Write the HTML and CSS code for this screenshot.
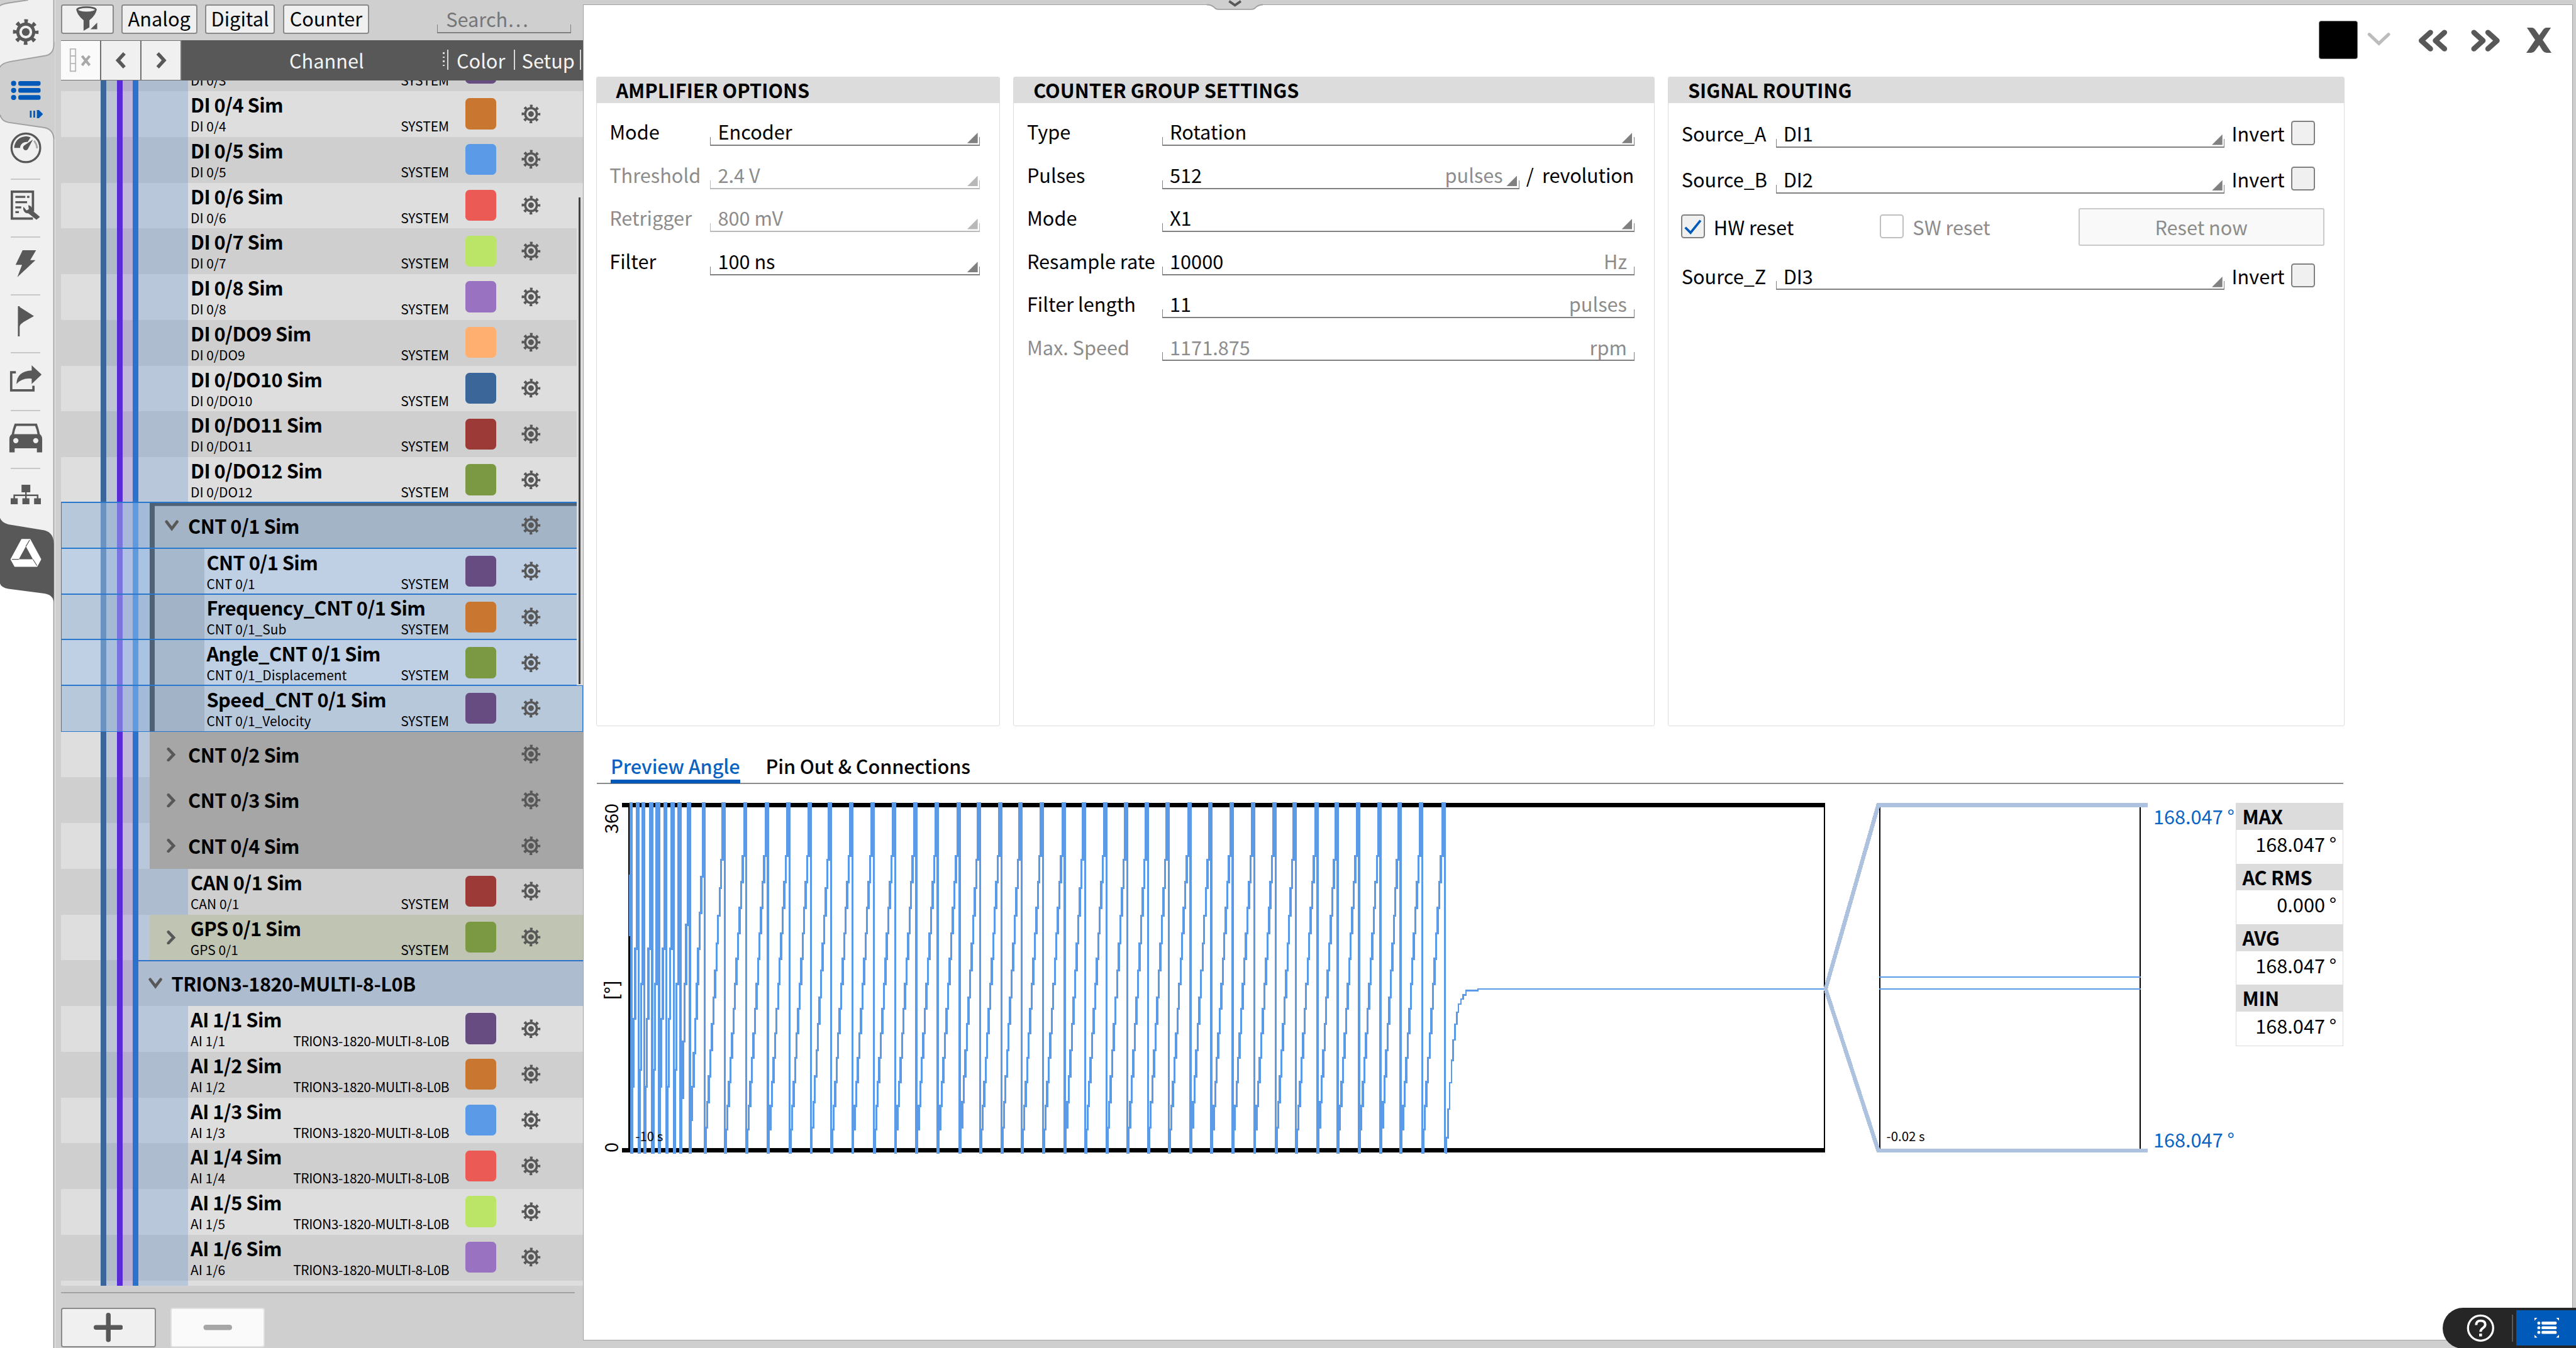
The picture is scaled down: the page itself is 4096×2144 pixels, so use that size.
FILE: index.html
```html
<!DOCTYPE html>
<html lang="en">
<head>
<meta charset="utf-8">
<title>Channel setup</title>
<link rel="stylesheet" href="styles.css">
</head>
<body>
<svg class="defs" aria-hidden="true">
  <symbol id="gear" viewBox="0 0 34 34">
    <circle cx="17" cy="17" r="14" fill="none" stroke="currentColor" stroke-width="5" stroke-dasharray="4.6 6.4" stroke-dashoffset="2.3"/>
    <circle cx="17" cy="17" r="10.3" fill="none" stroke="currentColor" stroke-width="4"/>
    <circle cx="17" cy="17" r="5" fill="currentColor"/>
  </symbol>
  <symbol id="chev-down" viewBox="0 0 24 20"><path d="M3 3 L12 15 L21 3" fill="none" stroke="currentColor" stroke-width="5" stroke-linecap="round"/></symbol>
  <symbol id="chev-right" viewBox="0 0 18 24"><path d="M4 2.5 L13 12 L4 21.5" fill="none" stroke="currentColor" stroke-width="5" stroke-linecap="round"/></symbol>
</svg>
<div class="app">
  <nav class="sidebar">
    <svg class="tabs-bg" viewBox="0 0 94 2304">
      <path d="M0 0H94V2304H0Z" fill="#fff"/>
      <path d="M0 8 Q2 4 14 3 L48 -2 H92 V925 L0 960Z" fill="#f0f0f0"/>
      <path d="M0 0H48L14 5Q2 7 0 10Z" fill="#cfcfcf"/>
      <path d="M94 72 H92 Q92 92 78 95 L18 105 Q2 108 0 115 V196 Q3 207 14 209 L76 218 Q92 221 92 238 H94Z" fill="#cfcfcf"/>
      <path d="M0 10Q2 7 14 5L48 0M92 0V75Q92 92 78 95L18 105Q2 108 0 115M0 196Q3 207 14 209L76 218Q92 221 92 240V2304" fill="none" stroke="#a0a0a0" stroke-width="2"/>
      <path d="M0 885 Q3 893 14 896 L76 906 Q92 910 92 930 V1030 Q91 1016 76 1014 L14 1006 Q2 1004 0 997Z" fill="#585858"/>
    </svg>
    <div class="slot slot-first"><svg class="ic" width="45" height="45"><use href="#gear"/></svg></div>
    <div class="slot slot-active">
      <svg width="52" height="34" viewBox="0 0 52 34"><g fill="#0059b8"><circle cx="5" cy="5" r="4.4"/><circle cx="5" cy="17" r="4.4"/><circle cx="5" cy="29" r="4.4"/><rect x="13" y="1" width="38" height="8" rx="3"/><rect x="13" y="13" width="38" height="8" rx="3"/><rect x="13" y="25" width="38" height="8" rx="3"/></g></svg>
      <svg class="pin" width="24" height="14" viewBox="0 0 24 14"><path d="M2 1V13M8 1V13" stroke="#0059b8" stroke-width="3"/><path d="M12.500 0H16L23 7L16 14H12.500Z" fill="#0059b8"/></svg>
    </div>
    <div class="slot"><svg width="54" height="54" viewBox="0 0 54 54"><circle cx="27" cy="27" r="24.500" fill="none" stroke="#585858" stroke-width="3.500"/><path d="M7 27A20 20 0 0 1 35 9L30 17A11 11 0 0 0 17 27Z" fill="#585858"/><path d="M39 13L31 28A4.500 4.500 0 1 1 24 23Z" fill="#585858"/><path d="M41 15Q46 21 46 28" fill="none" stroke="#a8a8a8" stroke-width="3"/></svg></div>
    <div class="slot rule"><svg width="52" height="52" viewBox="0 0 52 52"><path d="M38 30V2H2V48H30" fill="none" stroke="#585858" stroke-width="4"/><path d="M38 30V36M30 48H38" stroke="#585858" stroke-width="4"/><path d="M8 11H25M28 11H32M8 20H28M8 29H18M8 37H14" stroke="#585858" stroke-width="3.500"/><path d="M22 28A8 8 0 0 0 30 39L44 50L50 45L37 34A8 8 0 0 0 30 25L31 32L27 34Z" fill="#585858"/></svg></div>
    <div class="slot rule"><svg width="40" height="48" viewBox="0 0 40 48"><path d="M15 1H38L28 18H37L6 47L14 26H3Z" fill="#585858"/></svg></div>
    <div class="slot rule"><svg width="28" height="52" viewBox="0 0 28 52"><path d="M2 0V52" stroke="#585858" stroke-width="3"/><path d="M3 1L28 17L10 27Q5 30 3 35Z" fill="#585858"/></svg></div>
    <div class="slot rule"><svg width="56" height="48" viewBox="0 0 56 48"><path d="M11 13H3V44H41V36" fill="none" stroke="#585858" stroke-width="4"/><path d="M38 1L55 17L38 33V24Q22 22 12 33Q13 11 38 10Z" fill="#585858"/></svg></div>
    <div class="slot rule slot-car"><svg width="58" height="52" viewBox="0 0 58 52"><path d="M10 2H48Q51 10 53 20Q57 23 57 28V51H48V44H10V51H1V28Q1 23 5 20Q7 10 10 2ZM13 6Q10 13 9 20H49Q48 13 45 6Z" fill="#585858" fill-rule="evenodd"/><circle cx="12" cy="31" r="4.500" fill="#f0f0f0"/><circle cx="46" cy="31" r="4.500" fill="#f0f0f0"/></svg></div>
    <div class="slot rule slot-org"><svg width="52" height="34" viewBox="0 0 52 34"><path d="M18.500 0H33.500V13H18.500ZM0 23H12V34H0ZM20 23H32V34H20ZM40 23H52V34H40Z" fill="#585858"/><path d="M26 12V24M6 24V18H46V24" fill="none" stroke="#585858" stroke-width="2.600"/></svg></div>
    <div class="slot slot-logo"><svg width="54" height="48" viewBox="0 0 54 48"><path d="M20 1H34L52.500 35L46 47H8L1.500 35Z" fill="#fff" stroke="#fff" stroke-width="1.500" stroke-linejoin="round"/><path d="M27 13L39 35H15Z" fill="#585858"/><path d="M27 13L33.500 2M39 35L46 46M15 35H3" fill="none" stroke="#585858" stroke-width="1.200"/></svg></div>
  </nav>

  <section class="channels">
    <div class="filterbar">
      <button class="btn btn-funnel"><svg width="44" height="44" viewBox="0 0 44 44"><path d="M4 6Q4 14 16 24V42L26 36V24Q38 14 38 6Z" fill="#585858"/><ellipse cx="21" cy="6" rx="16" ry="4.500" fill="#f0f0f0" stroke="#585858" stroke-width="3"/><path d="M40 26V40H26Z" fill="#585858" stroke="#f0f0f0" stroke-width="1.500"/></svg></button>
      <button class="btn btn-analog">Analog</button>
      <button class="btn btn-digital">Digital</button>
      <button class="btn btn-counter">Counter</button>
      <div class="search">Search…</div>
    </div>
    <div class="listhead">
      <div class="hbtn dim"><svg width="40" height="42" viewBox="0 0 40 42"><path d="M3 2H12V40H3ZM3 14H12M3 27H12" fill="none" stroke="#b8b8b8" stroke-width="2"/><path d="M23 14L36 30M36 14L23 30" stroke="#a8a8a8" stroke-width="4.500"/></svg></div>
      <div class="hbtn"><svg width="22" height="30" viewBox="0 0 22 30"><path d="M17 3L6 15L17 27" fill="none" stroke="#585858" stroke-width="6"/></svg></div>
      <div class="hbtn"><svg width="22" height="30" viewBox="0 0 22 30"><path d="M5 3L16 15L5 27" fill="none" stroke="#585858" stroke-width="6"/></svg></div>
      <div class="hcol hcol-channel">Channel<i class="grip"></i></div>
      <div class="hcol hcol-color">Color</div>
      <div class="hcol hcol-setup">Setup</div>
    </div>
    <div class="listview">
      <div class="rows" id="rows"></div>
      <div class="scroll"></div>
    </div>
    <div class="listfoot">
      <button class="fbtn"><svg width="50" height="50" viewBox="0 0 50 50"><path d="M25 4V46M4 25H46" stroke="#585858" stroke-width="8" stroke-linecap="round"/></svg></button>
      <button class="fbtn off"><svg width="50" height="50" viewBox="0 0 50 50"><path d="M5 25H45" stroke="#a6a6a6" stroke-width="9" stroke-linecap="round"/></svg></button>
    </div>
  </section>

  <main class="main">
    <svg class="notch" width="96" height="18" viewBox="0 0 96 18"><path d="M0 7Q8 8 13 13Q15 16 20 16H76Q81 16 83 13Q88 8 96 7V0H0Z" fill="#cfcfcf"/><path d="M0 8Q8 8 13 13Q15 16 20 16H76Q81 16 83 13Q88 8 96 8" fill="none" stroke="#a0a0a0" stroke-width="2"/><path d="M38 2L48 9L58 2" fill="none" stroke="#585858" stroke-width="4"/></svg>
    <div class="card-page">
      <header class="topbar">
        <span class="colorbox"></span>
        <svg class="t-chev" width="40" height="26" viewBox="0 0 40 26"><path d="M3.500 4L20 19.500L36.500 4" fill="none" stroke="#bcbcbc" stroke-width="5.500" stroke-linecap="round"/></svg>
        <svg class="t-prev" width="50" height="40" viewBox="0 0 50 40"><path d="M21 6L5.500 20L21 34M45 6L29.500 20L45 34" fill="none" stroke="#585858" stroke-width="9" stroke-linecap="round" stroke-linejoin="round"/></svg>
        <svg class="t-next" width="50" height="40" viewBox="0 0 50 40"><path d="M5 6L20.500 20L5 34M29 6L44.500 20L29 34" fill="none" stroke="#585858" stroke-width="9" stroke-linecap="round" stroke-linejoin="round"/></svg>
        <svg class="t-close" width="44" height="46" viewBox="0 0 44 46"><path d="M1 1H9Q14 1 17 7L22 14L27 7Q30 1 35 1H42L28 22L43 44H35Q30 44 27 39L22 31L16 39Q13 44 8 44H0L15 22Z" fill="#585858"/></svg>
      </header>

      <div class="panels">
        <section class="panel amp">
          <h2>AMPLIFIER OPTIONS</h2>
          <div class="form">
            <div class="frow"><label>Mode</label><div class="control drop">Encoder</div></div>
            <div class="frow off"><label>Threshold</label><div class="control drop">2.4 V</div></div>
            <div class="frow off"><label>Retrigger</label><div class="control drop">800 mV</div></div>
            <div class="frow"><label>Filter</label><div class="control drop">100 ns</div></div>
          </div>
        </section>
        <section class="panel counter">
          <h2>COUNTER GROUP SETTINGS</h2>
          <div class="form">
            <div class="frow"><label>Type</label><div class="control drop">Rotation</div></div>
            <div class="frow"><label>Pulses</label><div class="control drop">512<span class="unit">pulses</span></div><span class="suffix">/ &nbsp;revolution</span></div>
            <div class="frow"><label>Mode</label><div class="control drop">X1</div></div>
            <div class="frow"><label>Resample rate</label><div class="control">10000<span class="unit">Hz</span></div></div>
            <div class="frow"><label>Filter length</label><div class="control">11<span class="unit">pulses</span></div></div>
            <div class="frow ro"><label>Max. Speed</label><div class="control">1171.875<span class="unit">rpm</span></div></div>
          </div>
        </section>
        <section class="panel signal">
          <h2>SIGNAL ROUTING</h2>
          <div class="form">
            <div class="frow"><label>Source_A</label><div class="control drop">DI1</div><span class="inv">Invert</span><i class="check"></i></div>
            <div class="frow"><label>Source_B</label><div class="control drop">DI2</div><span class="inv">Invert</span><i class="check"></i></div>
            <div class="resetrow">
              <i class="check"><svg width="34" height="34" viewBox="0 0 34 34"><path d="M4 18L13 27L30 6" fill="none" stroke="#0059b8" stroke-width="4"/></svg></i><span class="hw">HW reset</span>
              <i class="check off"></i><span class="sw">SW reset</span>
              <button class="reset">Reset now</button>
            </div>
            <div class="frow"><label>Source_Z</label><div class="control drop">DI3</div><span class="inv">Invert</span><i class="check"></i></div>
          </div>
        </section>
      </div>

      <div class="ptabs"><span class="ptab on">Preview Angle</span><span class="ptab">Pin Out &amp; Connections</span></div>

      <div class="preview">
        <div class="yaxis"><span class="y360">360</span><span class="yunit">[°]</span><span class="y0">0</span></div>
        <svg class="plot" width="2612" height="600" viewBox="1060 1371 2612 600">
          <path d="M1074.500 1376V1966M3116 1376V1966" stroke="#000" stroke-width="2.500"/>
          <path d="M1062 1376H3117.500M1062 1966H3117.500" stroke="#000" stroke-width="7.500"/>
          <path id="wave" fill="none" stroke="#5a9ae6" stroke-width="3.700"/>
          <path id="settle" fill="none" stroke="#5a9ae6" stroke-width="2.700"/>
          <path d="M3210.500 1376V1966M3655.700 1376V1966" stroke="#000" stroke-width="2.500"/>
          <path d="M3668 1376H3208L3118 1690L3208 1966H3668" fill="none" stroke="#adc2df" stroke-width="7"/>
          <path d="M3209 1669.500H3656.500M3209 1690H3656.500" stroke="#5a9ae6" stroke-width="2.700"/>
          <text class="ticktext" x="1085" y="1950.500">-10 s</text>
          <text class="ticktext" x="3222" y="1950.500">-0.02 s</text>
        </svg>
        <div class="limits"><span>168.047 °</span><span>168.047 °</span></div>
        <dl class="stats">
          <dt>MAX</dt><dd>168.047 °</dd>
          <dt>AC RMS</dt><dd>0.000 °</dd>
          <dt>AVG</dt><dd>168.047 °</dd>
          <dt>MIN</dt><dd>168.047 °</dd>
        </dl>
      </div>
    </div>
    <div class="dock">
      <svg width="50" height="50" viewBox="0 0 50 50"><circle cx="25" cy="25" r="21.500" fill="none" stroke="#fff" stroke-width="3.500"/><path d="M17.500 20Q17.500 12.500 25 12.500Q33 12.500 33 19Q33 22 29 25Q25 28 25 31.500" fill="none" stroke="#fff" stroke-width="4.200"/><rect x="22.600" y="34.500" width="4.800" height="4.800" fill="#fff"/></svg>
      <i class="docksep"></i>
      <div class="dockblue"><svg width="44" height="36" viewBox="0 0 44 36"><g fill="#fff"><path d="M1 1H6L1 6ZM43 1H38L43 6ZM1 35H6L1 30ZM43 35H38L43 30Z"/><rect x="6" y="7.500" width="5" height="5" rx="2"/><rect x="6" y="15.500" width="5" height="5" rx="2"/><rect x="6" y="23.500" width="5" height="5" rx="2"/><rect x="13" y="7.500" width="26" height="5" rx="2"/><rect x="13" y="15.500" width="26" height="5" rx="2"/><rect x="13" y="23.500" width="26" height="5" rx="2"/></g></svg></div>
    </div>
  </main>
</div>
<script src="app.js"></script>
</body>
</html>
```
FILE: styles.css
```css
* { box-sizing: border-box; margin: 0; padding: 0; }
html, body { width: 4096px; height: 2144px; overflow: hidden; background: #cfcfcf; }
.defs { position: absolute; width: 0; height: 0; }
svg { display: block; flex: none; }
button { font: inherit; color: inherit; }

.app {
  zoom: 0.930909;
  display: flex;
  width: 4400px;
  height: 2304px;
  overflow: hidden;
  background: #cfcfcf;
  color: #000;
  font-family: "Noto Sans CJK SC", "Noto Sans", sans-serif;
  font-size: 33px;
  line-height: 38px;
  white-space: nowrap;
}

/* icon sidebar */
.sidebar { position: relative; width: 94px; flex: none; display: flex; flex-direction: column; }
.tabs-bg { position: absolute; left: 0; top: 0; width: 94px; height: 2304px; }
.slot { position: relative; width: 88px; height: 98.8px; padding-bottom: 8px; flex: none; display: flex; align-items: center; justify-content: center; color: #585858; }
.slot-first { height: 109px; padding-bottom: 0; }
.slot-active { height: 98px; padding-bottom: 8px; }
.pin { position: absolute; left: 50px; top: 79px; }
.slot.rule::before { content: ""; position: absolute; left: 18px; right: 19px; top: -1px; height: 2.5px; background: #c8c8c8; }
.slot-car { padding-bottom: 4px; }
.slot-org { height: 90px; padding-bottom: 0; }
.slot-logo { height: 110px; padding-bottom: 0; }

/* channel list */
.channels { width: 902px; flex: none; padding-left: 10px; display: flex; flex-direction: column; }
.filterbar { height: 69px; display: flex; padding-top: 7px; gap: 13px; }
.btn { height: 50.500px; background: #f0f0f0; border: 2.5px solid #8a8a8a; border-radius: 4px; line-height: 44px; text-align: center; display: flex; justify-content: center; }
.btn-funnel { width: 90px; align-items: center; }
.btn-analog { width: 130px; }
.btn-digital { width: 120px; }
.btn-counter { width: 148px; }
.search { position: relative; width: 229px; margin-left: 103px; padding-left: 15px; line-height: 49px; color: #767676; }
.search::after, .control::after { content: ""; position: absolute; left: 0; right: 0; bottom: 0; height: 13px; border: 2px solid #808080; border-top: 0; border-bottom-width: 3px; }
.search::after { bottom: 12px; }

.listhead { height: 68px; background: #585858; display: flex; color: #f4f4f4; }
.hbtn { width: 69px; border: 1px solid #707070; border-width: 2px 3px 2px 0; background: #f0f0f0; display: flex; align-items: center; justify-content: center; }
.hbtn.dim { background: #fafafa; }
.hcol { position: relative; height: 68px; line-height: 69px; text-align: center; }
.hcol::after { content: ""; position: absolute; right: 0; top: 16px; height: 34px; width: 2px; background: #d8d8d8; }
.hcol-channel { width: 455px; padding-left: 39px; }
.hcol-color { width: 114px; padding-right: 3px; }
.hcol-setup { width: 113px; }
.grip { position: absolute; right: 7px; top: 20px; width: 3px; height: 28px; background: repeating-linear-gradient(#d8d8d8 0 3px, transparent 3px 7px); }

.listview { position: relative; height: 2060px; overflow: hidden; }
.rows { margin-top: -59.2px; }
.row { position: relative; display: flex; height: 78.16px; width: 892px; --bg: #dedede; --t1: #bdc6d2; --t2: #c2b8dc; --t3: #b9c7da; --b1: #3a6699; --b2: #5a2ad9; --b3: #2a72cc; background: var(--bg); }
.row.dark { --bg: #cfcfcf; --t1: #b0b9c6; --t2: #b6acd0; --t3: #aebccf; }
.row.sel { --bg: #bfd0e4; --t1: #a9c0dc; --t2: #b0bfe4; --t3: #a9c3e2; --b1: #6b93c1; --b2: #7a74de; --b3: #5f9adf; }
.row.sel.dark { --bg: #b8c8db; --t1: #a4b9d3; --t2: #a9b7da; --t3: #a3bbd9; }
.row.sel::after { content: ""; position: absolute; left: 0; right: 0; top: -2px; bottom: -1px; border: solid #2a78cc; border-width: 3px 0 0 2px; }
.row.last::after { border-width: 3px 2px 3px 2px; }
.row i { flex: none; }
.lead { width: 68.3px; }
.b1 { width: 9.6px; background: var(--b1); }
.t1 { width: 17.5px; background: var(--t1); }
.b2 { width: 9.6px; background: var(--b2); }
.t2 { width: 18px; background: var(--t2); }
.b3 { width: 9.8px; background: var(--b3); }
.t3 { width: 84.8px; background: var(--t3); }
.group .t3, .child .t3 { width: 18.6px; }
.device .t3 { width: 0; }
.b4 { width: 9px; background: #4f6275; }
.t4 { width: 84.5px; background: #a6b8cb; }
.dark .t4 { background: #a2b3c7; }
.cell { flex: 1; display: flex; min-width: 0; }
.group .cell { background: #a6a6a6; }
.open .cell { background: #a3b4c7; }
.open .cell { box-shadow: inset 0 5px 0 #4f6275; }
.gps .cell { background: #bfc4b3; }
.device .cell { background: #aebccf; border-top: 3px solid #2a72cc; }
.names { flex: 1; padding-left: 4px; }
.name { font-weight: 700; height: 45px; line-height: 46px; letter-spacing: -0.55px; }
.sub { display: flex; justify-content: space-between; font-size: 22.500px; line-height: 29px; height: 29px; }
.sub .long { letter-spacing: -0.45px; }
.group .name, .device .name { height: 78px; line-height: 78px; }
.group.gps .name { height: 45px; line-height: 46px; }
.device .name { line-height: 76px; }
.chev { flex: none; width: 66px; padding-left: 28px; display: flex; align-items: center; color: #585858; }
.gps .chev { width: 70px; }
.device .chev { padding-left: 17px; width: 56px; }
.open .chev { padding-left: 17px; width: 57px; }
.swatch { width: 53px; height: 53px; margin: 12px 2px 0 28px; border-radius: 7px; background: var(--c); }
.noswatch { width: 53px; margin-left: 30px; }
.cog { margin: 22px 72px 0 41px; color: #585858; }
.scroll { position: absolute; right: 0; top: 198px; width: 10.5px; height: 836px; background: #dedede; padding: 2px 4px 2px 3px; }
.scroll::before { content: ""; display: block; height: 100%; background: #404040; }

.listfoot { margin-top: 11px; margin-right: 14px; border-top: 3px solid #a2a2a2; padding-top: 24px; display: flex; gap: 25px; }
.fbtn { width: 162px; height: 68px; background: #f0f0f0; border: 2.5px solid #8a8a8a; border-radius: 4px; display: flex; align-items: center; justify-content: center; }
.fbtn.off { width: 161px; background: #fafafa; border-color: #e0e0e0; }

/* main page */
.main { position: relative; flex: 1; padding: 7px 5px 14px 0; }
.notch { position: absolute; left: 1065px; top: 0; }
.card-page { height: 2283px; background: #fff; border: 2px solid #a2a2a2; padding-left: 21px; }
.topbar { height: 123px; padding-top: 27px; display: flex; justify-content: flex-end; padding-right: 35px; }
.colorbox { width: 66px; height: 66px; background: #000; border-radius: 4px; border: 1px solid #777; margin-right: 16px; }
.t-chev { margin: 20px 47px 0 0; }
.t-prev { margin: 14px 41px 0 0; }
.t-next { margin: 14px 44px 0 0; }
.t-close { margin-top: 11px; }

.panels { display: flex; gap: 23px; height: 1110px; }
.panel { border: 2px solid #dcdcdc; border-radius: 3px; }
.panel h2 { height: 44px; background: #dcdcdc; font-size: 33px; font-weight: 700; line-height: 42px; padding-left: 33px; }
.amp { width: 690px; }
.counter { width: 1095px; }
.signal { width: 1156px; }
.form { display: flex; flex-direction: column; gap: 28.5px; padding-top: 28.5px; }
.frow { display: flex; height: 45px; }
.control { position: relative; flex: 1; padding-left: 13px; display: flex; justify-content: space-between; }
.frow, .control, .inv { line-height: 40px; }
.drop::before { content: ""; position: absolute; right: 4px; bottom: 5px; width: 18px; height: 18px; background: #808080; clip-path: polygon(100% 0, 100% 100%, 0 100%); }
.off .drop::before { background: #b8b8b8; }
.off .control::after { border-color: #bababa; }
.off, .ro { color: #8c8c8c; }
.unit { color: #8c8c8c; margin-right: 13px; }
.drop .unit { margin-right: 28px; }
.suffix { padding-left: 12px; width: 197px; letter-spacing: -0.2px; }
.amp .form { padding-left: 22px; padding-right: 33px; }
.amp label { width: 172px; }
.counter .form { padding-left: 22px; padding-right: 33px; }
.counter label { width: 231px; }
.signal .form { padding: 31.5px 50px 0 22px; gap: 33px; }
.signal label { width: 161px; }
.inv { width: 113px; padding-left: 12px; }
.check { width: 41px; height: 41px; margin-top: -1px; background: #f0f0f0; border: 2.5px solid #808080; border-radius: 5px; display: flex; justify-content: center; align-items: center; }
.check.off { background: #fff; border-color: #c0c0c0; }
.resetrow { display: flex; align-items: center; height: 64px; margin: -8px -16px -2px -1px; }
.hw { width: 299px; padding-left: 15px; }
.sw { flex: 1; padding-left: 15px; color: #8c8c8c; }
.reset { width: 420px; height: 64px; background: #f9f9f9; border: 2.5px solid #cacaca; border-radius: 3px; color: #8c8c8c; }

.ptabs { display: flex; gap: 44px; margin: 47px 0 0 1px; width: 2984px; height: 52px; padding-left: 24px; border-bottom: 2.5px solid #8c8c8c; font-weight: 500; letter-spacing: -0.15px; }
.ptab { height: 50px; line-height: 41px; }
.ptab.on { color: #0a63c2; border-bottom: 7px solid #0059b8; }

.preview { display: flex; margin-top: 31px; }
.yaxis { width: 42px; height: 600px; display: flex; flex-direction: column; align-items: center; justify-content: space-between; padding: 2px 0; }
.yaxis span { writing-mode: vertical-rl; transform: rotate(180deg); margin-left: 8px; font-size: 31px; line-height: 36px; }
.yaxis .yunit { margin-top: 6px; font-weight: 500; }
.plot { shape-rendering: crispEdges; }
.ticktext { font-size: 22px; }
.limits { width: 147px; height: 600px; padding: 6px 0 8px 6px; line-height: 34px; display: flex; flex-direction: column; justify-content: space-between; color: #0a63c2; }
.stats { width: 183px; height: 415px; border: 2px solid #dcdcdc; border-top: 0; margin-top: 1px; }
.stats dt { height: 46px; line-height: 46px; padding-left: 10px; background: #dcdcdc; font-weight: 700; letter-spacing: -0.3px; }
.stats dd { height: 57.5px; line-height: 47px; text-align: right; padding-right: 10px; }

.dock { position: absolute; right: 0; bottom: 0; width: 228px; height: 70px; background: #262626; border-radius: 36px 0 0 36px; display: flex; align-items: center; padding-left: 40px; }
.docksep { width: 2.5px; height: 46px; background: #5a5a5a; margin: 0 5px 0 28px; }
.dockblue { flex: 1; height: 60px; background: #005ab9; display: flex; align-items: center; padding-left: 31px; }
```
FILE: app.js
```js
const C = { violet: '#664c80', orange: '#c97730', blue: '#5a9ae6', red: '#eb5a55', lime: '#bbe567', purple: '#9973c2', peach: '#ffb070', navy: '#3a6699', maroon: '#9b3a37', green: '#7b9943' };
const T = 'TRION3-1820-MULTI-8-L0B';
const rows = [
  ['DI 0/3 Sim', 'DI 0/3', 'SYSTEM', C.violet],
  ['DI 0/4 Sim', 'DI 0/4', 'SYSTEM', C.orange],
  ['DI 0/5 Sim', 'DI 0/5', 'SYSTEM', C.blue],
  ['DI 0/6 Sim', 'DI 0/6', 'SYSTEM', C.red],
  ['DI 0/7 Sim', 'DI 0/7', 'SYSTEM', C.lime],
  ['DI 0/8 Sim', 'DI 0/8', 'SYSTEM', C.purple],
  ['DI 0/DO9 Sim', 'DI 0/DO9', 'SYSTEM', C.peach],
  ['DI 0/DO10 Sim', 'DI 0/DO10', 'SYSTEM', C.navy],
  ['DI 0/DO11 Sim', 'DI 0/DO11', 'SYSTEM', C.maroon],
  ['DI 0/DO12 Sim', 'DI 0/DO12', 'SYSTEM', C.green],
  ['CNT 0/1 Sim', '', '', '', 'group open sel'],
  ['CNT 0/1 Sim', 'CNT 0/1', 'SYSTEM', C.violet, 'child sel'],
  ['Frequency_CNT 0/1 Sim', 'CNT 0/1_Sub', 'SYSTEM', C.orange, 'child sel'],
  ['Angle_CNT 0/1 Sim', 'CNT 0/1_Displacement', 'SYSTEM', C.green, 'child sel'],
  ['Speed_CNT 0/1 Sim', 'CNT 0/1_Velocity', 'SYSTEM', C.violet, 'child sel last'],
  ['CNT 0/2 Sim', '', '', '', 'group'],
  ['CNT 0/3 Sim', '', '', '', 'group'],
  ['CNT 0/4 Sim', '', '', '', 'group'],
  ['CAN 0/1 Sim', 'CAN 0/1', 'SYSTEM', C.maroon],
  ['GPS 0/1 Sim', 'GPS 0/1', 'SYSTEM', C.green, 'group gps'],
  [T, '', '', '', 'device'],
  ['AI 1/1 Sim', 'AI 1/1', T, C.violet],
  ['AI 1/2 Sim', 'AI 1/2', T, C.orange],
  ['AI 1/3 Sim', 'AI 1/3', T, C.blue],
  ['AI 1/4 Sim', 'AI 1/4', T, C.red],
  ['AI 1/5 Sim', 'AI 1/5', T, C.lime],
  ['AI 1/6 Sim', 'AI 1/6', T, C.purple],
  ['', '', '', '', 'blank']
];
document.getElementById('rows').innerHTML = rows.map(([name, sub, src, color, kind = ''], n) => {
  const dark = n % 2 === 0 ? 'dark' : '';
  const down = /open|device/.test(kind);
  const chev = /group|device/.test(kind)
    ? `<span class="chev"><svg width="${down ? 24 : 18}" height="${down ? 20 : 24}"><use href="#chev-${down ? 'down' : 'right'}"/></svg></span>` : '';
  const edge = /open/.test(kind) ? '<i class="b4"></i>' : /child/.test(kind) ? '<i class="b4"></i><i class="t4"></i>' : '';
  const subline = sub ? `<div class="sub"><span>${sub}</span><span class="${src === T ? 'long' : ''}">${src}</span></div>` : '';
  const sw = color ? `<i class="swatch" style="--c:${color}"></i>` : '<i class="noswatch"></i>';
  const cog = /device/.test(kind) ? '<i style="width:146px"></i>' : '<svg class="cog" width="33" height="33"><use href="#gear"/></svg>';
  const title = n ? `<div class="name">${name}</div>` : '<div class="name"></div>';
  const right = kind === 'blank' ? '' : `<div class="names"${chev ? ' style="padding-left:0"' : ''}>${title}${subline}</div>${sw}${cog}`;
  return `<div class="row ${dark} ${kind}"><i class="lead"></i><i class="b1"></i><i class="t1"></i><i class="b2"></i><i class="t2"></i><i class="b3"></i><i class="t3"></i>${edge}<div class="cell">${chev}${right}</div></div>`;
}).join('');

// Angle trace: every revolution climbs from 0 to 360 and drops back.
const drops = [1078, 1090.8, 1100.5, 1113.8, 1125.5, 1137.8, 1150.5, 1162.2, 1178, 1203.6, 1237.8, 1274.5, 1311.2, 1348.5, 1384.7, 1419.4, 1455.6, 1492.3, 1528.6, 1564.8, 1601.5, 1638.8, 1674, 1710.2, 1744.9, 1781.4, 1818.4, 1853.2, 1889.6, 1925.5, 1960.9, 1996.2, 2033.2, 2068.6, 2105, 2142, 2178.9, 2213.2, 2250.2, 2284.4, 2320.9, 2357.8, 2392.1, 2429.1, 2467.6];
const yMax = 1372, yMin = 1970, stepX = 2.68;
let d = 'M1075.500 1600V1496H1077';
drops.forEach((x, i) => {
  d += `V${yMax}H${x}V${yMin}`;
  const next = drops[i + 1];
  if (!next) return;
  const n = Math.max(2, Math.round((next - x) / stepX));
  for (let k = 1; k < n; k++) {
    const f = k / n;
    d += `H${(x + (next - x) * (k - 0.4) / n).toFixed(1)}V${(yMin - (yMin - yMax) * (f * 0.93 + f * f * 0.07)).toFixed(1)}`;
  }
});
document.getElementById('wave').setAttribute('d', d);

// After the last drop the angle settles at 168 degrees.
let s = 'M2468 1970';
[[2470, 1944], [2473, 1895], [2476, 1850], [2479, 1812], [2482, 1777], [2485, 1750], [2488, 1730], [2491, 1716], [2495, 1707], [2499, 1700], [2504, 1693], [2524, 1690]].forEach(([x, y]) => { s += `H${x}V${y}`; });
document.getElementById('settle').setAttribute('d', s + 'H3117');
```
